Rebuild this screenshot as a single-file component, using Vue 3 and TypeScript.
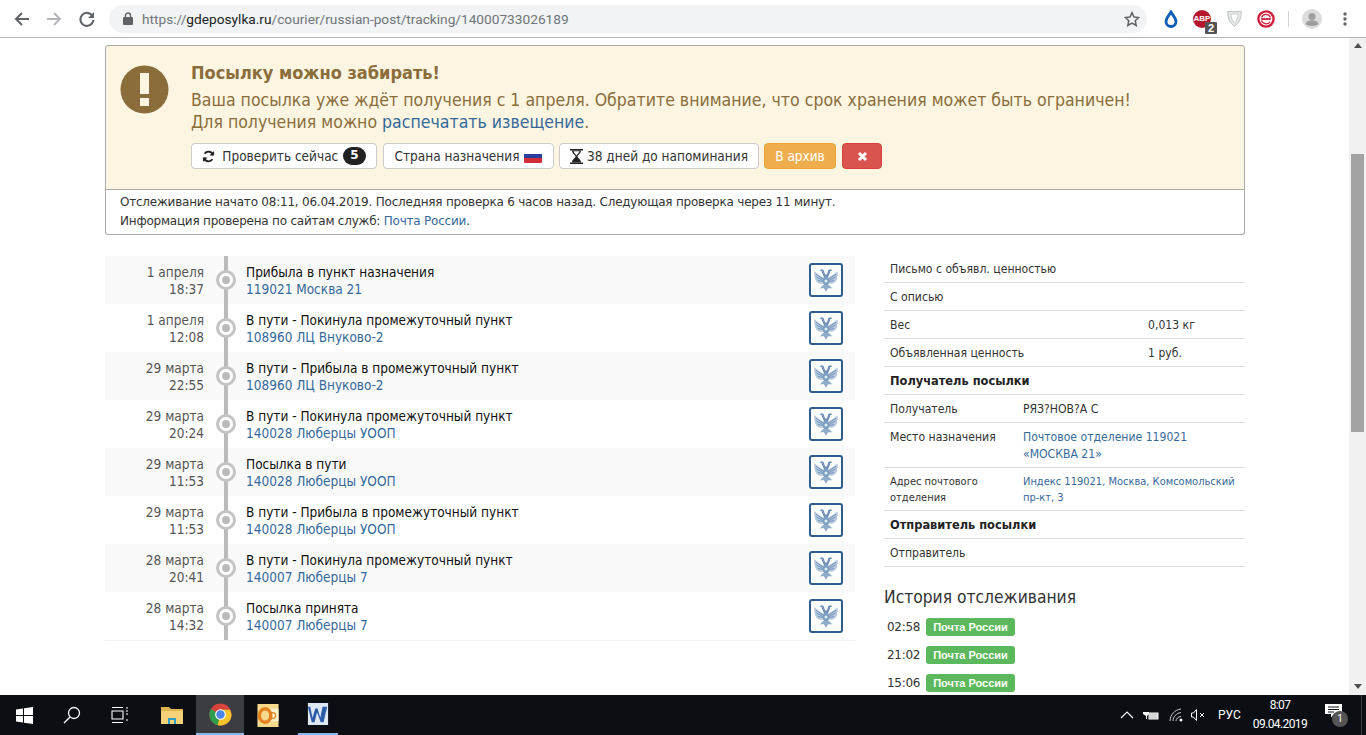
<script setup lang="ts">
const events = [
  { d: '1 апреля', t: '18:37', s: 'Прибыла в пункт назначения', p: '119021 Москва 21' },
  { d: '1 апреля', t: '12:08', s: 'В пути - Покинула промежуточный пункт', p: '108960 ЛЦ Внуково-2' },
  { d: '29 марта', t: '22:55', s: 'В пути - Прибыла в промежуточный пункт', p: '108960 ЛЦ Внуково-2' },
  { d: '29 марта', t: '20:24', s: 'В пути - Покинула промежуточный пункт', p: '140028 Люберцы УООП' },
  { d: '29 марта', t: '11:53', s: 'Посылка в пути', p: '140028 Люберцы УООП' },
  { d: '29 марта', t: '11:53', s: 'В пути - Прибыла в промежуточный пункт', p: '140028 Люберцы УООП' },
  { d: '28 марта', t: '20:41', s: 'В пути - Покинула промежуточный пункт', p: '140007 Люберцы 7' },
  { d: '28 марта', t: '14:32', s: 'Посылка принята', p: '140007 Люберцы 7' },
]
const history = ['02:58', '21:02', '15:06']
</script>

<template>
  <div class="screen">
    <header class="toolbar">
      <svg class="nav" width="18" height="18" viewBox="0 0 18 18"><path d="M16 9H3M9 3L3 9l6 6" fill="none" stroke="#5f6368" stroke-width="2"/></svg>
      <svg class="nav" width="18" height="18" viewBox="0 0 18 18"><path d="M2 9h13M9 3l6 6-6 6" fill="none" stroke="#b4b6b9" stroke-width="2"/></svg>
      <svg class="nav" width="18" height="18" viewBox="0 0 18 18"><path d="M14.5 6A6.5 6.5 0 1 0 15.4 10" fill="none" stroke="#5f6368" stroke-width="2"/><path d="M16 2v6h-6z" fill="#5f6368"/></svg>
      <div class="omnibox">
        <svg width="10" height="13" viewBox="0 0 10 13"><path d="M2.5 5V3.5a2.5 2.5 0 0 1 5 0V5" fill="none" stroke="#5f6368" stroke-width="1.4"/><rect y="5" width="10" height="8" rx="1" fill="#5f6368"/></svg>
        <span class="url"><span class="dim">https://</span>gdeposylka.ru<span class="dim">/courier/russian-post/tracking/14000733026189</span></span>
        <svg class="star" width="16" height="16" viewBox="0 0 16 16"><path d="M8 1.6l2 4.4 4.7.5-3.5 3.200 1 4.700L8 12l-4.200 2.400 1-4.700L1.300 6.500 6 6z" fill="none" stroke="#5f6368" stroke-width="1.500"/></svg>
      </div>
      <div class="exts">
        <svg width="14" height="18" viewBox="0 0 14 18"><path d="M7 2c2 3.500 5 6 5 9.500a5 5 0 0 1-10 0C2 8 5 5.500 7 2z" fill="none" stroke="#0d5cb6" stroke-width="2.800"/></svg>
        <div class="abp"><span class="abp-o">ABP</span><span class="abp-n">2</span></div>
        <svg class="shield" width="15" height="17" viewBox="0 0 15 17"><path d="M.7 1.500h13.600c0 6.500-1.500 11-6.800 14.800C2.200 12.500.7 8 .7 1.500z" fill="#e4e6e6" stroke="#c2c6c6"/><path d="M4 4h7c0 3.500-1 6.500-3.500 9C5 10.500 4 7.500 4 4z" fill="#fff" stroke="#cfd2d2"/></svg>
        <svg width="18" height="18" viewBox="0 0 18 18"><circle cx="9" cy="9" r="7.600" fill="none" stroke="#cf1f3a" stroke-width="2.400"/><path d="M4.200 9h9.600" stroke="#cf1f3a" stroke-width="1.800"/><path d="M4.500 7.500a4.800 4.800 0 0 1 9 0M13 11.800a4.800 4.800 0 0 1-8.500-1.500" fill="none" stroke="#cf1f3a" stroke-width="1.200"/></svg>
        <i class="divider"></i>
        <svg width="20" height="20" viewBox="0 0 20 20"><circle cx="10" cy="10" r="10" fill="#dcdcdc"/><circle cx="10" cy="7.500" r="3.500" fill="#9d9d9d"/><path d="M3.500 15c1-3 4-3.800 6.500-3.800S15.500 12 16.500 15c-3.500 2.500-9.500 2.500-13 0z" fill="#9d9d9d"/></svg>
        <svg class="dots" width="4" height="14" viewBox="0 0 4 14"><circle cx="2" cy="2" r="1.700" fill="#666"/><circle cx="2" cy="7" r="1.700" fill="#666"/><circle cx="2" cy="12" r="1.700" fill="#666"/></svg>
      </div>
    </header>

    <div class="viewport">
      <main class="page">
        <section class="alert">
          <svg class="alert-icon" width="49" height="49" viewBox="0 0 49 49"><circle cx="24.500" cy="24.500" r="24" fill="#8a6d3b"/><rect x="20" y="8" width="9" height="21" fill="#fcf5e1"/><rect x="20" y="33" width="9" height="8" fill="#fcf5e1"/></svg>
          <div class="alert-body">
            <h1>Посылку можно забирать!</h1>
            <p>Ваша посылка уже ждёт получения с 1 апреля. Обратите внимание, что срок хранения может быть ограничен!<br>Для получения можно <a>распечатать извещение</a>.</p>
            <div class="actions">
              <button class="btn b1">
                <svg width="13" height="13" viewBox="0 0 14 14"><path d="M12 5.500A5.200 5.200 0 0 0 2.800 4M2 8.500A5.200 5.200 0 0 0 11.200 10" fill="none" stroke="#222" stroke-width="2"/><path d="M13 1v5H8zM1 13V8h5z" fill="#222"/></svg>
                Проверить сейчас <b class="count">5</b>
              </button>
              <button class="btn b2">
                Страна назначения
                <span class="flag"><i></i><i></i><i></i></span>
              </button>
              <button class="btn b3">
                <svg width="13" height="15" viewBox="0 0 13 15"><path d="M0 .7h13M0 14.300h13" stroke="#222" stroke-width="1.400"/><path d="M2 1.500h9C11 4.500 8 6 7.300 7.500 8 9 11 10.500 11 13.500H2C2 10.500 5 9 5.700 7.500 5 6 2 4.500 2 1.500z" fill="#222"/><path d="M3.600 2.200h5.800C9 4 7.500 5 6.500 6.500 5.500 5 4 4 3.600 2.200z" fill="#fcfcfc"/></svg>
                38 дней до напоминания
              </button>
              <button class="btn warn">В архив</button>
              <button class="btn danger">
                <svg width="11" height="11" viewBox="0 0 11 11"><path d="M2 2l7 7M9 2l-7 7" stroke="#fff" stroke-width="3"/></svg>
              </button>
            </div>
          </div>
        </section>
        <section class="meta">
          Отслеживание начато 08:11, 06.04.2019. Последняя проверка 6 часов назад. Следующая проверка через 11 минут.<br>
          Информация проверена по сайтам служб: <a>Почта России</a>.
        </section>

        <div class="columns">
          <div class="timeline">
            <div v-for="(e, i) in events" :key="i" class="event">
              <div class="when">{{ e.d }}<br>{{ e.t }}</div>
              <div class="rail"><span class="node"></span></div>
              <div class="what">
                <div class="status">{{ e.s }}</div>
                <a>{{ e.p }}</a>
              </div>
              <div class="logo">
                <svg width="28" height="28" viewBox="0 0 28 28" opacity=".8">
                  <path d="M12 12C9 10 5 8 2.500 5c-.8 5 .5 10 3.500 12 2 1.300 4.500 1 6-.5z" fill="#a3bad3"/>
                  <path d="M16 12c3-2 7-4 9.500-7 .8 5-.5 10-3.500 12-2 1.300-4.500 1-6-.5z" fill="#a3bad3"/>
                  <path d="M4 8l7 5M4.500 11l6.500 3.500M6 14.500l5 1M24 8l-7 5M23.500 11L17 14.500M22 14.500l-5 1" stroke="#4a76a3" stroke-width=".9"/>
                  <path d="M9 3.500c1.500-.5 2.800.3 3 1.800.2 1.500 1 2.700 2 3.700 1-1 1.800-2.200 2-3.700.2-1.500 1.500-2.300 3-1.800l1.500 1.200-2 .4c-.8 2-1.500 4.400-2.500 6H12c-1-1.600-1.700-4-2.500-6l-2-.4z" fill="#4a76a3"/>
                  <ellipse cx="14" cy="15" rx="3.200" ry="4.800" fill="#5f88b3"/>
                  <circle cx="14" cy="15" r="1.500" fill="#dfe8f1"/>
                  <path d="M11 19l-3.500 3.500 4-.5 2.500 3.500 2.500-3.500 4 .5L17 19z" fill="#7799bd"/>
                </svg>
              </div>
            </div>
          </div>

          <aside class="side">
            <div class="row"><span>Письмо с объявл. ценностью</span></div>
            <div class="row"><span>С описью</span></div>
            <div class="row"><span class="wide">Вес</span><span>0,013 кг</span></div>
            <div class="row"><span class="wide">Объявленная ценность</span><span>1 руб.</span></div>
            <div class="row"><b class="head">Получатель посылки</b></div>
            <div class="row"><span class="key">Получатель</span><span>РЯЗ?НОВ?А С</span></div>
            <div class="row tall"><span class="key">Место назначения</span><a class="val">Почтовое отделение 119021 «МОСКВА 21»</a></div>
            <div class="row small"><span class="key">Адрес почтового отделения</span><a class="val">Индекс 119021, Москва, Комсомольский пр-кт, 3</a></div>
            <div class="row"><b class="head">Отправитель посылки</b></div>
            <div class="row"><span>Отправитель</span></div>
            <h2>История отслеживания</h2>
            <div v-for="h in history" :key="h" class="hist">
              <span class="time">{{ h }}</span><span class="badge">Почта России</span>
            </div>
          </aside>
        </div>
      </main>
      <div class="scrollbar">
        <i class="up"></i>
        <i class="thumb"></i>
        <i class="down"></i>
      </div>
    </div>

    <footer class="taskbar">
      <div class="task start"><svg width="17" height="17" viewBox="0 0 17 17"><path d="M0 2.500L7 1.500v6.500H0zM8 1.300L17 0v8H8zM0 9h7v6.500L0 14.500zM8 9h9v8L8 15.700z" fill="#fff"/></svg></div>
      <div class="task search"><svg width="18" height="18" viewBox="0 0 18 18"><circle cx="11" cy="7" r="5.500" fill="none" stroke="#fff" stroke-width="1.300"/><path d="M7 11l-6 6" stroke="#fff" stroke-width="1.500"/></svg></div>
      <div class="task view"><svg width="18" height="16" viewBox="0 0 18 16"><path d="M1 .5h11M1 15.500h11M1 4h11v8H1zM15 1h2M15 7h2M15 13h2M15 4h2" fill="none" stroke="#fff" stroke-width="1.100"/></svg></div>
      <div class="task folder"><svg width="22" height="18" viewBox="0 0 22 18"><path d="M0 1h8l2 2h12v3H0z" fill="#e0b44c"/><rect y="5" width="22" height="13" fill="#f5d27a"/><rect x="7" y="12" width="8" height="6" fill="#2f9fc9"/><rect x="9" y="14" width="4" height="4" fill="#f5d27a"/></svg></div>
      <div class="task active"><svg width="23" height="23" viewBox="0 0 24 24"><circle cx="12" cy="12" r="11.500" fill="#d9443a"/><path d="M12 12L1.900 6.300A11.500 11.500 0 0 0 9 23.100z" fill="#2e9d4e"/><path d="M12 12l-3 11.100A11.500 11.500 0 0 0 23.500 12L22 7H12z" fill="#f6c42d"/><circle cx="12" cy="12" r="5.600" fill="#fff"/><circle cx="12" cy="12" r="4.400" fill="#4a86e8"/></svg></div>
      <div class="task"><svg width="22" height="23" viewBox="0 0 22 24"><rect width="22" height="24" fill="#f7d98c"/><rect x="12" y="5" width="10" height="13" fill="#fdf1cc"/><ellipse cx="8" cy="12" rx="6" ry="7" fill="none" stroke="#e2811e" stroke-width="3.500"/><circle cx="16" cy="12" r="3" fill="none" stroke="#e2811e" stroke-width="1.200"/></svg></div>
      <div class="task word"><svg width="22" height="22" viewBox="0 0 22 24"><rect width="22" height="24" fill="#dfe9f6"/><path d="M0 4l2.500 0 2.500 12 3-10h2.500l3 10 2.500-12H21l-4 17h-3L10 10l-2.800 11h-3z" fill="#2a5ca8"/></svg></div>
      <div class="tray">
        <svg width="14" height="8" viewBox="0 0 14 8"><path d="M1 7l6-6 6 6" fill="none" stroke="#fff" stroke-width="1.200"/></svg>
        <svg class="batt" width="16" height="12" viewBox="0 0 16 12"><path d="M1 0v3M4 0v3M0 3h6v2L4 7v3H3V7L0 5z" fill="#fff"/><path d="M5.500 3.500h10v7h-10z" fill="#fff"/><path d="M6 4h8.500v6H6z" fill="#d8d8d8"/></svg>
        <svg class="wifi" width="16" height="14" viewBox="0 0 16 14"><path d="M1 13C1 7 6 1.500 12 1M4 13c0-4 3.500-8 8-8.500M7 13c0-2 2-4.500 5-4.500" fill="none" stroke="#c9c9c9"/><circle cx="12" cy="12" r="1.500" fill="#fff"/></svg>
        <svg class="vol" width="15" height="12" viewBox="0 0 15 12"><path d="M5.500.5v11L2.500 8H.5V4h2zM9 4l4 4M13 4l-4 4" fill="none" stroke="#fff"/></svg>
        <span class="lang">РУС</span>
        <div class="clock">8:07<br>09.04.2019</div>
        <div class="notif">
          <svg width="17" height="14" viewBox="0 0 17 14"><path d="M0 0h17v10H9l-3 3.500V10H0z" fill="#fff"/><path d="M3 3h11M3 5.500h11M3 8h6" stroke="#0c1117"/></svg>
          <span class="notif-n">1</span>
        </div>
        <i class="peek"></i>
      </div>
    </footer>
  </div>
</template>

<style>
html, body { margin: 0; overflow: hidden; }
</style>

<style scoped>
.screen { width: 1366px; height: 735px; display: flex; flex-direction: column; overflow: hidden; font-family: "DejaVu Sans", sans-serif; font-stretch: condensed; color: #333; background: #fff; }
a { color: #36699b; }
i { display: block; }

.toolbar { height: 37px; flex: none; border-bottom: 1px solid #b4b4b4; display: flex; align-items: center; padding-left: 13px; background: #fff; font-stretch: normal; }
.nav { margin-right: 14px; }
.nav:nth-child(2) { margin-right: 15px; }
.nav:nth-child(3) { margin-right: 13px; }
.omnibox { width: 1038px; height: 28px; flex: none; box-sizing: border-box; background: #f1f3f4; border-radius: 14px; display: flex; align-items: center; padding-left: 14px; }
.url { font-family: "Roboto", sans-serif; font-size: 13.700px; color: #202124; margin-left: 9px; }
.dim { color: #70757a; }
.star { margin-left: auto; margin-right: 7px; }
.exts { display: flex; align-items: center; flex: 1; min-width: 0; padding-left: 17px; }
.exts > svg:nth-child(1) { margin-right: 15px; flex: none; }
.abp { position: relative; width: 18px; height: 18px; margin-right: 16px; flex: none; }
.abp-o { display: block; width: 18px; height: 18px; border-radius: 50%; background: #b5182c; color: #fff; font: bold 8px/18px "Liberation Sans", sans-serif; text-align: center; }
.abp-n { position: absolute; right: -6px; bottom: -6px; width: 12px; height: 12px; background: #555; color: #fff; font: bold 11px/12px "Liberation Sans", sans-serif; text-align: center; border-radius: 1px; }
.shield { margin-right: 15px; flex: none; }
.divider { width: 1px; height: 16px; background: #d5d5d5; margin: 0 13px; flex: none; }
.dots { margin-left: 21px; flex: none; }

.viewport { flex: 1; min-height: 0; display: flex; overflow: hidden; }
.page { flex: 1; min-width: 0; padding: 7px 104px 0 105px; overflow: hidden; }
.scrollbar { width: 17px; flex: none; background: #f1f1f1; display: flex; flex-direction: column; align-items: center; }
.up { margin-top: 5px; width: 0; height: 0; border: 4px solid transparent; border-top: 0; border-bottom: 5px solid #505050; }
.thumb { margin-top: 106px; width: 13px; height: 278px; background: #a3a3a3; }
.down { margin-top: auto; margin-bottom: 6px; width: 0; height: 0; border: 4px solid transparent; border-bottom: 0; border-top: 5px solid #505050; }

.alert { height: 145px; box-sizing: border-box; background: #fcf5e1; border: 1px solid #aaa; border-radius: 3px 3px 0 0; display: flex; color: #8a6d3b; }
.alert-icon { margin: 19px 0 0 14px; flex: none; }
.alert-body { margin-left: 22px; }
h1 { margin: 16px 0 0; font-size: 18px; line-height: 22px; font-weight: bold; }
.alert-body p { margin: 5px 0 0; font-size: 17.550px; line-height: 22px; }
.actions { display: flex; gap: 6px; margin-top: 10px; }
.btn { height: 26px; box-sizing: border-box; border: 1px solid #ccc; border-radius: 4px; background: #fff; color: #333; font-family: "DejaVu Sans", sans-serif; font-stretch: condensed; font-size: 13.500px; display: flex; align-items: center; justify-content: center; gap: 7px; padding: 0; white-space: nowrap; }
.b1 { width: 186px; }
.b2 { width: 171px; gap: 5px; }
.b3 { width: 200px; margin-left: -1px; gap: 4px; }
.count { display: inline-block; background: #222; color: #fff; border-radius: 10px; font-size: 12px; line-height: 15px; padding: 1px 7px 2px; margin-left: -2px; font-stretch: normal; }
.flag { width: 18px; height: 14px; display: flex; flex-direction: column; border-radius: 1px; overflow: hidden; }
.flag i { flex: 1; }
.flag i:nth-child(1) { background: #fff; }
.flag i:nth-child(2) { background: #2a3f9d; }
.flag i:nth-child(3) { background: #d22c3a; }
.warn { width: 72px; background: #f0ad4e; border-color: #eea236; color: #fff; margin-left: -1px; }
.danger { width: 40px; background: #d9534f; border-color: #d43f3a; }

.meta { height: 45px; box-sizing: border-box; border: 1px solid #aaa; border-top: 0; border-radius: 0 0 3px 3px; padding: 3px 14px 0; font-size: 12px; font-stretch: normal; letter-spacing: -.22px; line-height: 19px; }

.columns { display: flex; margin-top: 21px; }
.timeline { width: 750px; flex: none; border-bottom: 1px solid #f3f3f3; align-self: flex-start; }
.event { height: 48px; display: flex; align-items: stretch; font-size: 13.500px; line-height: 17px; }
.event:nth-child(odd) { background: #f9f9f9; }
.when { width: 99px; flex: none; text-align: right; color: #555; padding-top: 8px; box-sizing: border-box; }
.rail { width: 44px; flex: none; position: relative; display: flex; align-items: center; justify-content: center; margin-right: -2px; }
.rail::before { content: ""; position: absolute; left: 20px; width: 4px; top: 0; bottom: 0; background: #bbb; }
.node { position: relative; width: 20px; height: 20px; box-sizing: border-box; border-radius: 50%; border: 3px solid #c4c4c4; background: #fff; display: flex; align-items: center; justify-content: center; }
.node::after { content: ""; width: 8px; height: 8px; border-radius: 50%; background: #bbb; }
.what { flex: 1; padding-top: 8px; color: #111; }
.status { white-space: nowrap; }
.logo { width: 34px; height: 34px; box-sizing: border-box; border: 2px solid #2f5d8c; border-radius: 3px; background: #fff; margin: 7px 12px 0 0; display: flex; align-items: center; justify-content: center; flex: none; }

.side { width: 361px; margin: -1px 0 0 29px; font-size: 12.100px; }
.row { min-height: 28px; box-sizing: border-box; border-bottom: 1px solid #ddd; display: flex; padding: 6px 6px 0; line-height: 17px; }
.head { font-size: 12.700px; color: #222; margin-top: -1px; }
.wide { width: 258px; flex: none; }
.key { width: 133px; flex: none; }
.val { flex: 1; }
.tall { height: 45px; }
.small { height: 43px; font-size: 11px; line-height: 16px; padding-top: 6px; }
h2 { margin: 19px 0 10px; font-size: 17.300px; line-height: 22px; font-weight: normal; }
.hist { height: 18px; margin-bottom: 10px; display: flex; align-items: center; }
.time { width: 42px; padding-left: 3px; box-sizing: border-box; font-size: 12px; font-stretch: normal; letter-spacing: -.3px; }
.badge { width: 89px; height: 18px; background: #5cb85c; border-radius: 3px; color: #fff; font: bold 11px/18px "Liberation Sans", sans-serif; text-align: center; }

.taskbar { height: 40px; flex: none; background: #0b0f14; display: flex; align-items: center; color: #fff; font-stretch: normal; }
.task { height: 40px; width: 48px; box-sizing: border-box; display: flex; align-items: center; justify-content: center; flex: none; }
.folder { margin-left: 4px; }
.active { background: #3a3d41; border-bottom: 2px solid #86b7e8; }
.word { width: 40px; margin-left: 6px; border-bottom: 2px solid #86b7e8; }
.tray { margin-left: auto; display: flex; align-items: center; height: 40px; font-family: "Roboto", sans-serif; font-size: 12px; }
.batt { margin-left: 9px; }
.wifi { margin-left: 10px; }
.vol { margin-left: 6px; }
.lang { width: 22px; margin-left: 12px; text-align: center; }
.clock { width: 60px; margin-left: 10px; letter-spacing: -.6px; line-height: 19px; text-align: center; }
.notif { position: relative; width: 24px; height: 24px; margin-left: 15px; padding-top: 1px; box-sizing: border-box; }
.notif-n { position: absolute; left: 7px; top: 8px; width: 16px; height: 16px; border-radius: 50%; background: #555; font-size: 10px; line-height: 16px; text-align: center; }
.peek { width: 1px; height: 40px; background: #3a3d41; margin: 0 4px 0 12px; }
</style>
